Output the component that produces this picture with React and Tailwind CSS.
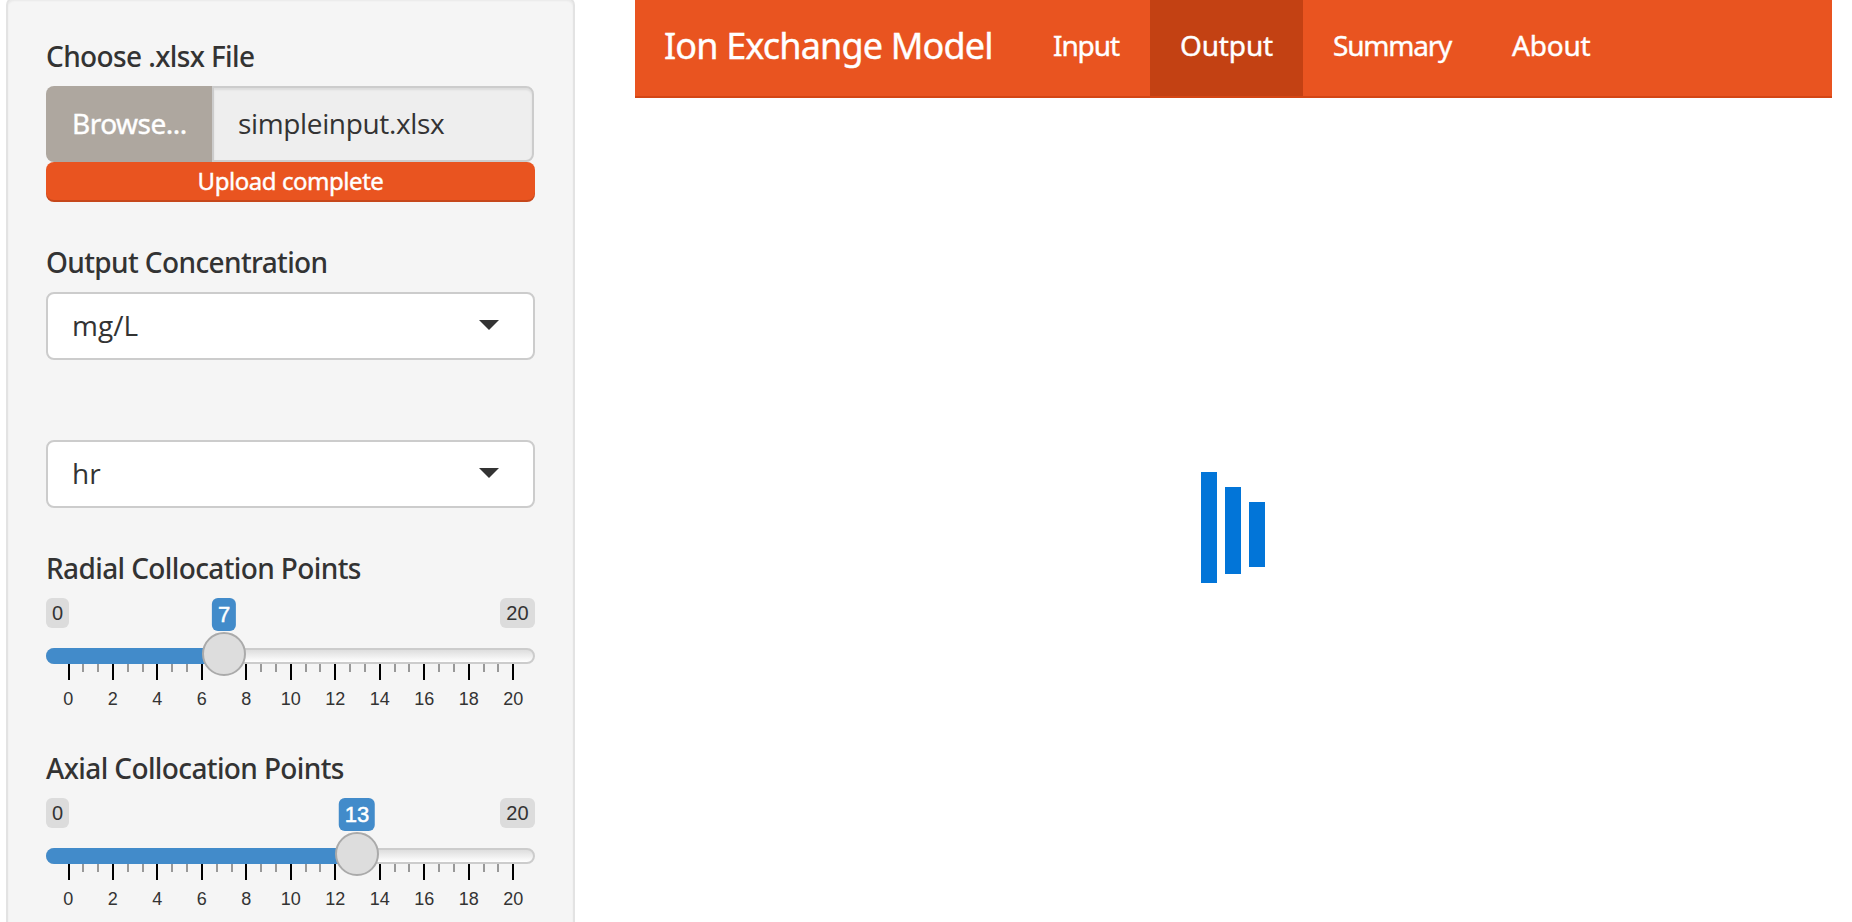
import React from "react";

const MAJOR = [0, 2, 4, 6, 8, 10, 12, 14, 16, 18, 20];
const MAJOR_X = [22, 66, 110, 155, 199, 244, 288, 333, 377, 422, 466];
const MINOR_X = [36, 51, 81, 96, 125, 140, 170, 185, 214, 229, 259, 273, 303, 318, 348, 362, 392, 407, 437, 451];

function Label({ children }) {
  return (
    <div className="mb-2.5 h-10 pt-px whitespace-pre text-[28px] leading-10 font-medium tracking-[-0.62px] text-[#333]">
      {children}
    </div>
  );
}

function Select({ value }) {
  return (
    <div className="flex h-[68px] items-center justify-between rounded-lg border-2 border-[#ccc] bg-white pr-[34px] pb-0.5 pl-6 font-['Open_Sans',sans-serif] text-[28px] text-[#333]">
      <span>{value}</span>
      <svg width="20" height="10" viewBox="0 0 20 10">
        <path d="M0 0H20L10 10Z" fill="#333" />
      </svg>
    </div>
  );
}

function Slider({ value }) {
  const center = 23 + value * 22.15;
  return (
    <div className="relative h-[122px] font-['Liberation_Sans',Arial,sans-serif]">
      <div className="flex justify-between text-[20px] leading-[30px] text-[#333]">
        <span className="rounded-md bg-[#dcdcdc] px-[6px]">0</span>
        <span className="rounded-md bg-[#dcdcdc] px-[6.4px]">20</span>
      </div>
      <div className="mt-5 h-4 rounded-full border-2 border-[#ccc] bg-linear-to-b from-[#dedede] to-white" />
      <svg width="489" height="17" className="block">
        {MAJOR_X.map((x) => (
          <rect key={x} x={x} y="0" width="2" height="16" fill="#000" />
        ))}
        {MINOR_X.map((x) => (
          <rect key={x} x={x} y="0" width="2" height="8" fill="#999" />
        ))}
      </svg>
      <div className="flex w-[489.5px] text-[18px] leading-[36px] text-[#333]">
        {MAJOR.map((n) => (
          <span key={n} className="w-[44.5px] shrink-0 text-center">
            {n}
          </span>
        ))}
      </div>
      <div className="absolute top-[50px] left-0 h-4 rounded-l-full bg-[#428bca]" style={{ width: center }} />
      <div
        className="absolute top-0 -translate-x-1/2 rounded-md bg-[#428bca] px-[6px] text-[22px] leading-[33px] text-white"
        style={{ left: center, WebkitTextStroke: "0.5px white" }}
      >
        {value}
      </div>
      <div
        className="absolute top-[34px] size-11 -translate-x-1/2 rounded-full border-2 border-[#aaa] bg-[#ddd]"
        style={{ left: center }}
      />
    </div>
  );
}

export default function App() {
  return (
    <div className="flex h-[922px] overflow-hidden bg-white font-['Noto_Sans',sans-serif]">
      <aside className="-mt-[3px] ml-1.5 h-[960px] w-[569px] shrink-0 rounded-lg border-2 border-[#e3e3e3] bg-[#f5f5f5] px-[38px] pt-9 shadow-[inset_0_2px_2px_rgba(0,0,0,0.05)]">
        <Label>Choose .xlsx File</Label>
        <div className="mt-[11px] flex h-[76px] w-[488px] text-[28px]">
          <div className="flex w-[166px] items-center rounded-l-lg bg-[#aea79f] pb-0.5 pl-[26px] tracking-[-0.5px] text-white [-webkit-text-stroke:0.4px_white]">
            Browse...
          </div>
          <div className="flex flex-1 items-center rounded-r-lg border-2 border-[#ccc] bg-[#eee] pb-0.5 pl-6 font-['Open_Sans',sans-serif] tracking-[-0.35px] text-[#333] shadow-[inset_0_2px_2px_rgba(0,0,0,0.075)]">
            simpleinput.xlsx
          </div>
        </div>
        <div className="h-10 rounded-lg bg-[#e95420] text-center text-[24px] leading-[38px] tracking-[-0.45px] text-white shadow-[inset_0_-2px_0_rgba(0,0,0,0.15)] [-webkit-text-stroke:0.4px_white]">
          Upload complete
        </div>
        <div className="mt-[39px]">
          <Label>Output Concentration</Label>
          <div className="mt-[11px]">
            <Select value="mg/L" />
          </div>
        </div>
        <div className="mt-20">
          <Select value="hr" />
        </div>
        <div className="mt-[39px]">
          <Label>Radial Collocation Points</Label>
          <div className="mt-[11px]">
            <Slider value={7} />
          </div>
        </div>
        <div className="mt-[27px]">
          <Label>Axial Collocation Points</Label>
          <div className="mt-[11px]">
            <Slider value={13} />
          </div>
        </div>
      </aside>
      <main className="ml-[60px] flex w-[1197px] flex-col">
        <nav className="flex h-[98px] shrink-0 border-b-2 border-[#d34615] bg-[#e95420] text-[28px] leading-[90px] whitespace-nowrap text-white [-webkit-text-stroke:0.4px_white]">
          <div className="w-[387px] pl-[29px] text-[36px] leading-[92px] tracking-[-0.85px]">Ion Exchange Model</div>
          <div className="w-32 pl-[31px] tracking-[-1.1px]">Input</div>
          <div className="w-[153px] bg-[#c34113] pl-[30px] tracking-[-0.15px]">Output</div>
          <div className="w-[179px] pl-[30px] tracking-[-1.2px]">Summary</div>
          <div className="pl-[30px] tracking-[-0.2px]">About</div>
        </nav>
        <div className="mt-[374px] ml-[566px] flex items-start gap-2">
          <div className="h-[110.6px] w-4 bg-[#0275d8]" />
          <div className="mt-[15.4px] h-[86.3px] w-4 bg-[#0275d8]" />
          <div className="mt-[29.7px] h-[65px] w-4 bg-[#0275d8]" />
        </div>
      </main>
    </div>
  );
}
